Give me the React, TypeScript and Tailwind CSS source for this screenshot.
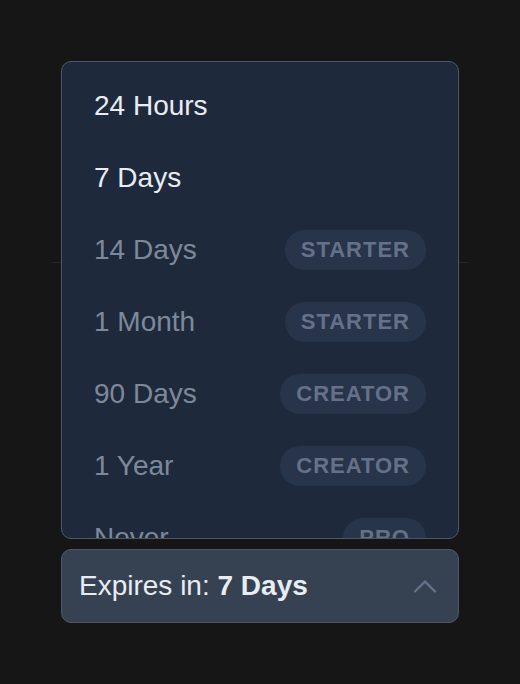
import { useState } from 'react';

type Option = {
  label: string;
  plan?: string;
};

const options: Option[] = [
  { label: '24 Hours' },
  { label: '7 Days' },
  { label: '14 Days', plan: 'STARTER' },
  { label: '1 Month', plan: 'STARTER' },
  { label: '90 Days', plan: 'CREATOR' },
  { label: '1 Year', plan: 'CREATOR' },
  { label: 'Never', plan: 'PRO' },
];

function ChevronUp() {
  return (
    <svg width="24" height="14" viewBox="0 0 24 14" fill="none" className="shrink-0">
      <polyline
        points="2,12.5 12,2.5 22,12.5"
        stroke="#64748b"
        strokeWidth="2.2"
        strokeLinecap="round"
        strokeLinejoin="round"
      />
    </svg>
  );
}

export default function App() {
  const [selected, setSelected] = useState('7 Days');
  const [open, setOpen] = useState(true);

  return (
    <div className="min-h-[684px] bg-[#161616] pt-[262px] font-['Liberation_Sans',Arial,sans-serif]">
      {/* divider behind the menu */}
      <div className="mx-auto h-px w-[416px] bg-[#272727]" />

      <div className="relative mx-auto mt-[286px] w-[398px]">
        {/* Options menu */}
        {open && (
          <div className="absolute bottom-[calc(100%+10px)] left-0 right-0 h-[478px] overflow-hidden rounded-[10px] border border-[#4e5868] bg-[#1e293b] py-2">
            {options.map((opt) => {
              const locked = !!opt.plan;
              return (
                <button
                  key={opt.label}
                  disabled={locked}
                  onClick={() => {
                    setSelected(opt.label);
                    setOpen(false);
                  }}
                  className="flex h-[72px] w-full shrink-0 items-center justify-between px-8 text-left"
                >
                  <span
                    className={
                      locked
                        ? 'text-[28px] leading-none text-[#7d899b]'
                        : 'text-[28px] leading-none text-[#e8edf3]'
                    }
                  >
                    {opt.label}
                  </span>
                  {opt.plan && (
                    <span className="flex h-10 items-center rounded-full bg-[#28344a] px-4 text-[22px] font-bold leading-none tracking-[1px] text-[#647188]">
                      {opt.plan}
                    </span>
                  )}
                </button>
              );
            })}
          </div>
        )}

        {/* Trigger */}
        <button
          onClick={() => setOpen((v) => !v)}
          className="flex h-[74px] w-full items-center justify-between rounded-[10px] border border-[#4e5868] bg-[#364152] pl-[17px] pr-[21px]"
        >
          <span className="text-[28px] leading-none text-[#e8edf3]">
            Expires in: <span className="font-bold">{selected}</span>
          </span>
          <ChevronUp />
        </button>
      </div>
    </div>
  );
}
